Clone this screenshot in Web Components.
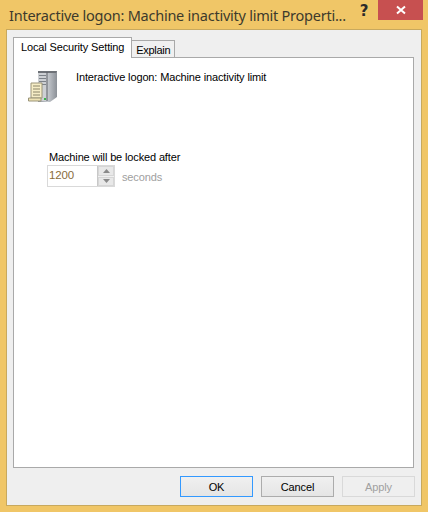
<!DOCTYPE html>
<html><head><meta charset="utf-8"><style>html,body{margin:0;padding:0;background:#f0c667}</style></head><body>
<prop-dialog title-text="Interactive logon: Machine inactivity limit Properti...">
<sec-page></sec-page>
</prop-dialog>
<script>
const UI='font:11px/14px "Liberation Sans",sans-serif;letter-spacing:-.14px;';
class TitleBar extends HTMLElement{constructor(){super();this.attachShadow({mode:'open'}).innerHTML=`<style>
:host{display:flex;height:29px;align-items:flex-start;box-sizing:border-box;padding-left:9px;padding-right:5px;font-family:"Noto Sans","Open Sans",sans-serif;color:#3d3a2c}
.t{flex:1;min-width:0;font-size:14.5px;line-height:20px;padding-top:5px;white-space:nowrap;letter-spacing:-.24px}
.h{width:16px;height:20px;margin-right:6px;padding-top:1px;font:bold 15px/20px "DejaVu Sans",sans-serif;text-align:center;color:#2b2b2b}
.x{width:45px;height:20px;background:#c75050;display:flex;align-items:center;justify-content:center}
</style><div class="t"><slot></slot></div><div class="h">?</div><div class="x"><svg width="10" height="10" viewBox="0 0 10 10"><path d="M1 1.500L9 8.500M9 1.500L1 8.500" stroke="#fff" stroke-width="2" fill="none"/></svg></div>`}}
customElements.define('title-bar',TitleBar);

class TabBtn extends HTMLElement{constructor(){super();this.attachShadow({mode:'open'}).innerHTML=`<style>
:host{display:block;box-sizing:border-box;${UI}letter-spacing:-.3px;color:#000;border:1px solid #a9a9a9;background:#f0f0f0;height:18px;margin-top:3px;margin-left:-1px;padding:2px 4px 0 4px;white-space:nowrap}
:host([active]){${UI}background:#fff;height:21px;margin-top:0;margin-left:0;border-bottom:0;padding:2px 7px 0 7px;z-index:1;position:relative}
</style><slot></slot>`}}
customElements.define('tab-btn',TabBtn);

class PushBtn extends HTMLElement{constructor(){super();this.attachShadow({mode:'open'}).innerHTML=`<style>
:host{display:flex;align-items:center;justify-content:center;box-sizing:border-box;width:73px;height:21px;border:1px solid #acacac;background:linear-gradient(#f0f0f0,#e5e5e5);${UI}color:#000}
:host([primary]){border:1px solid #3399ff}
:host([disabled]){border-color:#d9d9d9;background:#efefef;color:#a0a0a0}
</style><slot></slot>`}}
customElements.define('push-btn',PushBtn);

class SpinBox extends HTMLElement{constructor(){super();this.attachShadow({mode:'open'}).innerHTML=`<style>
:host{display:flex;box-sizing:border-box;width:68px;height:22px;border:1px solid #d9d9d9;background:#fff;font:11.5px/18px "Liberation Sans",sans-serif;color:#8a6d3b}
.v{flex:1;padding:0 0 0 1px}
.s{width:17px;display:flex;flex-direction:column;background:#f0f0f0;border-left:1px solid #c8c8c8;gap:1px;box-sizing:border-box}
.b{flex:1;display:flex;align-items:center;justify-content:center;background:#e8e8e8;border:1px solid #d6d6d6}
</style><div class="v"><slot></slot></div><div class="s"><div class="b"><svg width="7" height="4"><path d="M3.500 0L7 4H0Z" fill="#8a8a8a"/></svg></div><div class="b"><svg width="7" height="4"><path d="M0 0H7L3.500 4Z" fill="#8a8a8a"/></svg></div></div>`}}
customElements.define('spin-box',SpinBox);

class SecPage extends HTMLElement{constructor(){super();this.attachShadow({mode:'open'}).innerHTML=`<style>
:host{display:block;box-sizing:border-box;height:100%;padding:12px 13px 0 13px;${UI}color:#000}
.top{display:flex;gap:16px;align-items:flex-start}
.lbl{margin:47px 0 0 22px}
.row{display:flex;align-items:center;gap:7px;margin:1px 0 0 20px}
.sec{color:#a0a0a0;padding-top:2px}
</style><div class="top"><svg width="33" height="33" viewBox="0 0 33 33" style="flex:none"><defs><linearGradient id="g" x1="0" x2="1"><stop offset="0" stop-color="#8c9198"/><stop offset=".5" stop-color="#c6cacf"/><stop offset="1" stop-color="#8b9097"/></linearGradient></defs>
<path d="M11 1H30V27L23 32H11Z" fill="url(#g)"/><path d="M11 1H20V31H11Z" fill="#cdd0d4"/><path d="M11 1H30L29 3H11Z" fill="#6d7177"/><path d="M20 2V31" stroke="#5a5e66"/><path d="M12 5.500H19M12 8.500H19M12 11.500H19M12 14.500H19" stroke="#7c8289"/><rect x="17" y="28" width="2" height="2" fill="#39b54a"/>
<path d="M4 13H15V28H4Z" fill="#f6edc6" stroke="#9a9478"/><path d="M1.500 28H14V31H1.500Z" fill="#efe3b4" stroke="#9a9478"/><path d="M6 16H13M6 19H13M6 22H13M6 25H13" stroke="#8a8468"/></svg>
<span>Interactive logon: Machine inactivity limit</span></div>
<div class="lbl">Machine will be locked after</div>
<div class="row"><spin-box>1200</spin-box><span class="sec">seconds</span></div>`}}
customElements.define('sec-page',SecPage);

class PropDialog extends HTMLElement{constructor(){super();this.attachShadow({mode:'open'}).innerHTML=`<style>
:host{display:flex;flex-direction:column;width:428px;height:512px;box-sizing:border-box;background:#f0c667;padding-bottom:6px}
.c{flex:1;margin:0 6px 0 6px;border:1px solid #c8a95e;background:#efefef;padding:7px 6px 0 6px;display:flex;flex-direction:column;box-sizing:border-box;min-height:0}
.tabs{display:flex;height:20px;align-items:flex-start}
.pg{height:411px;margin-right:1px;border:1px solid #a9a9a9;background:#fff;box-sizing:border-box}
.btns{display:flex;justify-content:flex-end;gap:8px;margin-top:8px}
</style><title-bar></title-bar><div class="c"><div class="tabs"><tab-btn active>Local Security Setting</tab-btn><tab-btn>Explain</tab-btn></div>
<div class="pg"><slot></slot></div>
<div class="btns"><push-btn primary>OK</push-btn><push-btn>Cancel</push-btn><push-btn disabled>Apply</push-btn></div></div>`;
this.shadowRoot.querySelector('title-bar').textContent=this.getAttribute('title-text')}}
customElements.define('prop-dialog',PropDialog);
</script></body></html>
